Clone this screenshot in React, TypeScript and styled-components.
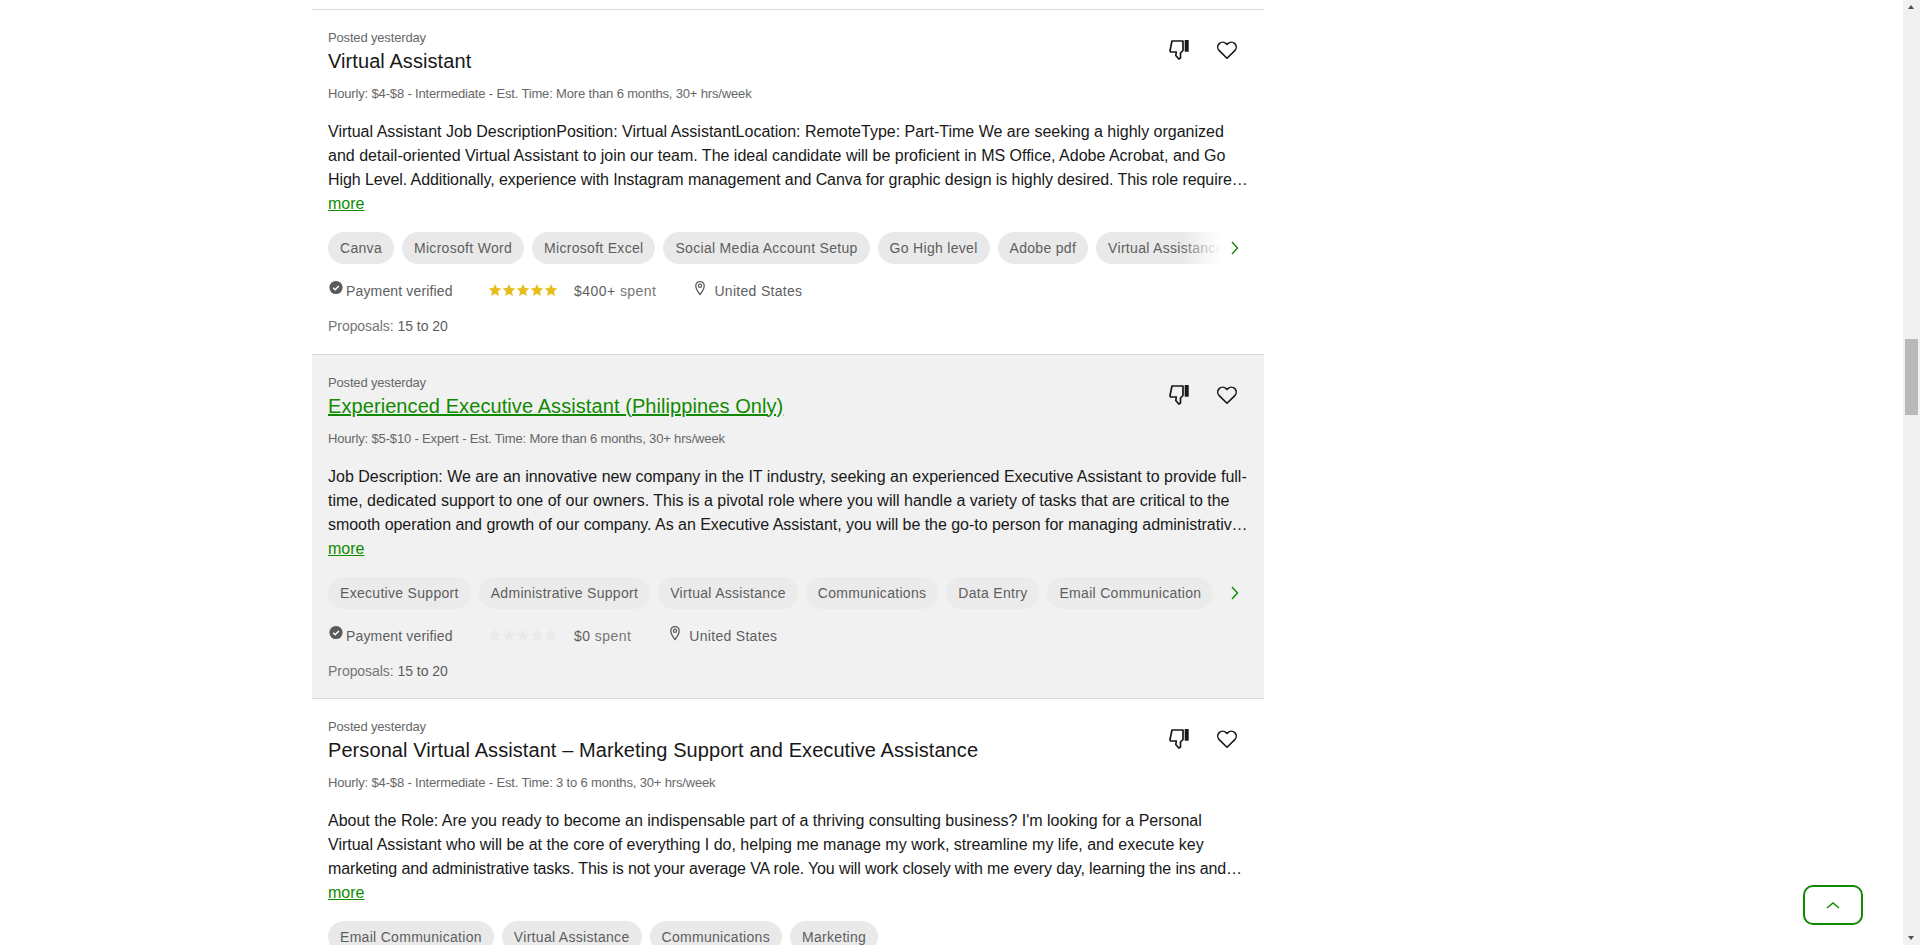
import styled, { createGlobalStyle } from "styled-components";

const GlobalStyle = createGlobalStyle`
  html, body {
    margin: 0;
    height: 100%;
    overflow: hidden;
    background: #ffffff;
  }
  body {
    font-family: "Liberation Sans", Arial, sans-serif;
    color: #181818;
  }
  * { box-sizing: border-box; }
`;

type Job = {
  title: string;
  meta: string;
  lines: string[];
  lastTracking: number;
  tags: string[];
  rated: boolean;
  spent: string;
  active?: boolean;
  faded?: boolean;
};

const jobs: Job[] = [
  {
    title: "Virtual Assistant",
    meta: "Hourly: $4-$8 - Intermediate - Est. Time: More than 6 months, 30+ hrs/week",
    lines: [
      "Virtual Assistant Job DescriptionPosition: Virtual AssistantLocation: RemoteType: Part-Time We are seeking a highly organized",
      "and detail-oriented Virtual Assistant to join our team. The ideal candidate will be proficient in MS Office, Adobe Acrobat, and Go",
      "High Level. Additionally, experience with Instagram management and Canva for graphic design is highly desired. This role require…",
    ],
    lastTracking: -0.085,
    tags: ["Canva", "Microsoft Word", "Microsoft Excel", "Social Media Account Setup", "Go High level", "Adobe pdf", "Virtual Assistance"],
    rated: true,
    spent: "$400+",
    faded: true,
  },
  {
    title: "Experienced Executive Assistant (Philippines Only)",
    meta: "Hourly: $5-$10 - Expert - Est. Time: More than 6 months, 30+ hrs/week",
    lines: [
      "Job Description: We are an innovative new company in the IT industry, seeking an experienced Executive Assistant to provide full-",
      "time, dedicated support to one of our owners. This is a pivotal role where you will handle a variety of tasks that are critical to the",
      "smooth operation and growth of our company. As an Executive Assistant, you will be the go-to person for managing administrativ…",
    ],
    lastTracking: -0.04,
    tags: ["Executive Support", "Administrative Support", "Virtual Assistance", "Communications", "Data Entry", "Email Communication"],
    rated: false,
    spent: "$0",
    active: true,
  },
  {
    title: "Personal Virtual Assistant – Marketing Support and Executive Assistance",
    meta: "Hourly: $4-$8 - Intermediate - Est. Time: 3 to 6 months, 30+ hrs/week",
    lines: [
      "About the Role: Are you ready to become an indispensable part of a thriving consulting business? I'm looking for a Personal",
      "Virtual Assistant who will be at the core of everything I do, helping me manage my work, streamline my life, and execute key",
      "marketing and administrative tasks. This is not your average VA role. You will work closely with me every day, learning the ins and…",
    ],
    lastTracking: -0.13,
    tags: ["Email Communication", "Virtual Assistance", "Communications", "Marketing"],
    rated: true,
    spent: "$400+",
  },
];

function ThumbsDownIcon() {
  return (
    <svg width="24" height="24" viewBox="0 0 24 24" fill="none">
      <path
        d="M5 3h11v9.500l-2.500 2.500v5l-1.700 1-3-3.500.5-3.500H3.500L3 12.500z"
        stroke="#181818"
        strokeWidth="1.700"
        strokeLinejoin="round"
      />
      <rect x="17.700" y="2" width="4" height="11.700" fill="#181818" />
    </svg>
  );
}

function HeartIcon() {
  return (
    <svg width="24" height="24" viewBox="0 0 24 24" fill="none">
      <path
        d="M12 20.200 4.200 12.600a5 5 0 0 1 0-7 4.900 4.900 0 0 1 6.900 0l.9.900.9-.9a4.900 4.900 0 0 1 6.900 0 5 5 0 0 1 0 7z"
        stroke="#181818"
        strokeWidth="1.600"
        strokeLinejoin="round"
      />
    </svg>
  );
}

function VerifiedIcon() {
  return (
    <svg width="16" height="16" viewBox="0 0 16 16">
      <circle cx="8" cy="7.500" r="6.600" fill="#5a5a5a" />
      <path d="m5.200 7.700 2 2 3.600-3.800" stroke="#fff" strokeWidth="1.500" fill="none" />
    </svg>
  );
}

function StarIcon({ color }: { color: string }) {
  return (
    <svg width="14" height="14" viewBox="0 0 24 24">
      <path d="m12 1.500 3.200 7.100 7.700.8-5.800 5.200 1.700 7.600L12 18.300l-6.800 3.900 1.700-7.600-5.800-5.200 7.700-.8z" fill={color} />
    </svg>
  );
}

function PinIcon() {
  return (
    <svg width="16" height="18" viewBox="0 0 16 18" fill="none">
      <path d="M8 15.500C5.500 12.400 3.800 10 3.800 6.800a4.200 4.200 0 0 1 8.400 0c0 3.200-1.700 5.600-4.200 8.700z" stroke="#5a5a5a" strokeWidth="1.300" />
      <circle cx="8" cy="6.800" r="1.600" stroke="#5a5a5a" strokeWidth="1.200" />
    </svg>
  );
}

function ChevronRight() {
  return (
    <svg width="12" height="16" viewBox="0 0 12 16" fill="none">
      <path d="m3 2 5.500 6L3 14" stroke="#108a00" strokeWidth="1.400" />
    </svg>
  );
}

export default function App() {
  return (
    <>
      <GlobalStyle />
      <Page>
        <JobList>
          {jobs.map((job) => (
            <JobCard key={job.title} $active={job.active}>
              <Posted>Posted yesterday</Posted>
              <Title $active={job.active}>{job.title}</Title>
              <Actions>
                <IconButton aria-label="Not interested"><ThumbsDownIcon /></IconButton>
                <IconButton aria-label="Save job"><HeartIcon /></IconButton>
              </Actions>
              <Meta>{job.meta}</Meta>
              <Description>
                {job.lines.map((line, i) => (
                  <DescriptionLine key={line} $tracking={i === 2 ? job.lastTracking : 0}>{line}</DescriptionLine>
                ))}
              </Description>
              <More>more</More>
              <TagRow>
                <TagTrack>
                  {job.tags.map((tag) => (
                    <Tag key={tag} $active={job.active}>{tag}</Tag>
                  ))}
                  {job.faded ? <TagFade /> : null}
                </TagTrack>
                {job.tags.length > 4 ? <TagNext><ChevronRight /></TagNext> : null}
              </TagRow>
              <ClientRow>
                <Verified>
                  <VerifiedIcon />
                  <span>Payment verified</span>
                </Verified>
                <Stars>
                  {[0, 1, 2, 3, 4].map((i) => (
                    <StarIcon key={i} color={job.rated ? "#e6bf1c" : "#e9e9e9"} />
                  ))}
                </Stars>
                <Spent><strong>{job.spent}</strong> spent</Spent>
                <Location>
                  <PinIcon />
                  <span>United States</span>
                </Location>
              </ClientRow>
              <Proposals>Proposals: <strong>15 to 20</strong></Proposals>
            </JobCard>
          ))}
        </JobList>
      </Page>
      <BackToTop aria-label="Back to top">
        <svg width="16" height="10" viewBox="0 0 16 10" fill="none">
          <path d="m2 8 6-5 6 5" stroke="#108a00" strokeWidth="1.500" />
        </svg>
      </BackToTop>
      <ScrollTrack>
        <ScrollArrow />
        <ScrollThumb />
        <ScrollArrow $down />
      </ScrollTrack>
    </>
  );
}

const Page = styled.div`
  height: 945px;
  overflow: hidden;
  padding: 9px 0 0 312px;
`;

const JobList = styled.div`
  width: 952px;
`;

const JobCard = styled.section<{ $active?: boolean }>`
  position: relative;
  height: 344.5px;
  padding: 20px 16px 0;
  border-top: 1px solid #d9d9d9;
  background: ${(props) => (props.$active ? "#f1f1f1" : "#ffffff")};
`;

const Posted = styled.div`
  font-size: 13px;
  line-height: 16px;
  letter-spacing: -0.16px;
  color: #676767;
`;

const Title = styled.h2<{ $active?: boolean }>`
  margin: 2px 0 0;
  font-size: 20px;
  line-height: 26px;
  font-weight: 400;
  letter-spacing: 0.08px;
  color: ${(props) => (props.$active ? "#108a00" : "#181818")};
  text-decoration: ${(props) => (props.$active ? "underline" : "none")};
`;

const Actions = styled.div`
  position: absolute;
  top: 28px;
  right: 25px;
  display: flex;
  gap: 24px;
`;

const IconButton = styled.button`
  width: 24px;
  height: 24px;
  padding: 0;
  border: 0;
  background: none;
`;

const Meta = styled.div`
  margin-top: 12px;
  font-size: 13px;
  line-height: 16px;
  letter-spacing: -0.16px;
  color: #676767;
`;

const Description = styled.div`
  margin-top: 18px;
  font-size: 16px;
  line-height: 24px;
  color: #181818;
`;

const DescriptionLine = styled.div<{ $tracking: number }>`
  white-space: nowrap;
  letter-spacing: ${(props) => props.$tracking}px;
`;

const More = styled.div`
  font-size: 16px;
  line-height: 24px;
  color: #108a00;
  text-decoration: underline;
`;

const TagRow = styled.div`
  display: flex;
  align-items: center;
  margin-top: 16px;
`;

const TagTrack = styled.div`
  position: relative;
  display: flex;
  gap: 8px;
  width: 893px;
  overflow: hidden;
`;

const Tag = styled.span<{ $active?: boolean }>`
  flex: none;
  height: 32px;
  padding: 0 12px;
  border-radius: 16px;
  background: ${(props) => (props.$active ? "#ebebeb" : "#e9e9e9")};
  font-size: 14px;
  line-height: 32px;
  letter-spacing: 0.3px;
  color: #5e5e5e;
`;

const TagFade = styled.div`
  position: absolute;
  top: 0;
  right: 0;
  width: 40px;
  height: 32px;
  background: linear-gradient(to right, rgba(255, 255, 255, 0), #ffffff);
`;

const TagNext = styled.div`
  display: flex;
  margin-left: 8px;
`;

const ClientRow = styled.div`
  display: flex;
  align-items: center;
  margin-top: 16px;
  font-size: 14px;
  line-height: 22px;
  letter-spacing: 0.15px;
  color: #5e5e5e;
`;

const Verified = styled.div`
  display: flex;
  gap: 2px;
  width: 160px;
`;

const Stars = styled.div`
  display: flex;
  margin-top: -2px;
`;

const Spent = styled.div`
  margin-left: 16px;
  letter-spacing: 0.45px;
  color: #767676;
  strong { font-weight: 400; color: #5e5e5e; }
`;

const Location = styled.div`
  display: flex;
  gap: 6px;
  margin-left: 36px;
  letter-spacing: 0.3px;
  svg { margin-top: -1px; }
`;

const Proposals = styled.div`
  margin-top: 13px;
  font-size: 14px;
  line-height: 22px;
  letter-spacing: -0.05px;
  color: #767676;
  strong { font-weight: 400; color: #5e5e5e; }
`;

const BackToTop = styled.button`
  position: fixed;
  left: 1803px;
  top: 885px;
  display: flex;
  align-items: center;
  justify-content: center;
  width: 60px;
  height: 40px;
  padding: 0;
  border: 2px solid #108a00;
  border-radius: 10px;
  background: #ffffff;
`;

const ScrollTrack = styled.div`
  position: fixed;
  top: 0;
  right: 0;
  width: 17px;
  height: 945px;
  padding: 339px 2px 0;
  background: #f1f1f1;
`;

const ScrollThumb = styled.div`
  height: 76px;
  background: #b9b9b9;
`;

const ScrollArrow = styled.div<{ $down?: boolean }>`
  position: absolute;
  left: 5px;
  ${(props) => (props.$down ? "bottom: 5px;" : "top: 5px;")}
  border-left: 3.5px solid transparent;
  border-right: 3.5px solid transparent;
  ${(props) => (props.$down ? "border-top: 4px solid #505050;" : "border-bottom: 4px solid #505050;")}
`;
